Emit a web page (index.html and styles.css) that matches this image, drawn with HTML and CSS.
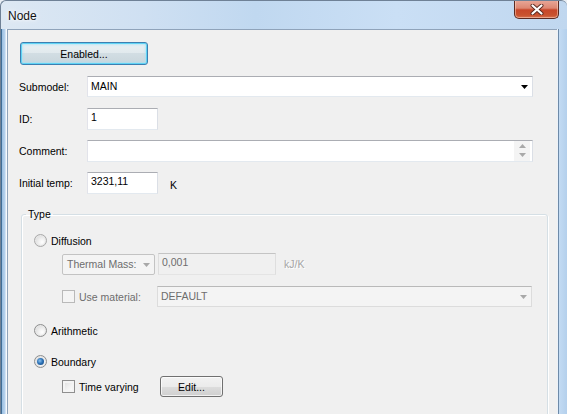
FILE: index.html
```html
<!DOCTYPE html>
<html>
<head>
<meta charset="utf-8">
<title>Node</title>
<link rel="stylesheet" href="styles.css">
</head>
<body>
<div class="window">
  <div class="titlebar">
    <span class="title">Node</span>
    <div class="close">
      <svg width="14" height="11" viewBox="0 0 14 11"><path d="M2.5 1.5 L11.5 9.5 M11.5 1.5 L2.5 9.5" stroke="#5a2a20" stroke-width="4" stroke-linecap="round"/><path d="M2.5 1.5 L11.5 9.5 M11.5 1.5 L2.5 9.5" stroke="#fff" stroke-width="2.2" stroke-linecap="round"/></svg>
    </div>
  </div>
  <div class="frame">
    <div class="edge-left"></div>
    <div class="client">
      <div class="btn default enabled-btn">Enabled...</div>
      <div class="form">
        <div class="row">
          <span class="lbl">Submodel:</span>
          <div class="field combo wide"><span class="val">MAIN</span>
            <svg class="arrow" width="7" height="4" viewBox="0 0 7 4"><path d="M0 0H7L3.5 4Z" fill="#000"/></svg>
          </div>
        </div>
        <div class="row">
          <span class="lbl">ID:</span>
          <div class="field edit short"><span class="val">1</span></div>
        </div>
        <div class="row">
          <span class="lbl">Comment:</span>
          <div class="field edit wide spin">
            <span class="val"></span>
            <div class="spinner">
              <svg width="7" height="4" viewBox="0 0 7 4"><path d="M0 4H7L3.5 0Z" fill="#a9a9a9"/></svg>
              <svg width="7" height="4" viewBox="0 0 7 4"><path d="M0 0H7L3.5 4Z" fill="#a9a9a9"/></svg>
            </div>
          </div>
        </div>
        <div class="row">
          <span class="lbl">Initial temp:</span>
          <div class="field edit short"><span class="val">3231,11</span></div>
          <span class="unit">K</span>
        </div>
      </div>
      <fieldset class="group">
        <legend>Type</legend>
        <div class="opt r-diff">
          <span class="radio dim"></span><span>Diffusion</span>
        </div>
        <div class="sub r-thermal">
          <div class="field dcombo thermal"><span class="val">Thermal Mass:</span>
            <svg class="arrow" width="7" height="4" viewBox="0 0 7 4"><path d="M0 0H7L3.5 4Z" fill="#a8a8a8"/></svg>
          </div>
          <div class="field dedit mass"><span class="val">0,001</span></div>
          <span class="dunit">kJ/K</span>
        </div>
        <div class="sub r-mat">
          <span class="check dis"></span><span class="chk-lbl dis-text">Use material:</span>
          <div class="field dcombo material"><span class="val">DEFAULT</span>
            <svg class="arrow" width="7" height="4" viewBox="0 0 7 4"><path d="M0 0H7L3.5 4Z" fill="#a8a8a8"/></svg>
          </div>
        </div>
        <div class="opt r-arith">
          <span class="radio"></span><span>Arithmetic</span>
        </div>
        <div class="opt r-bound">
          <span class="radio on"></span><span>Boundary</span>
        </div>
        <div class="sub r-time">
          <span class="check"></span><span class="chk-lbl">Time varying</span>
          <div class="btn edit-btn">Edit...</div>
        </div>
      </fieldset>
    </div>
    <div class="edge-right"></div>
  </div>
</div>
</body>
</html>
```
FILE: styles.css
```css
* { box-sizing: border-box; }
html, body { margin: 0; padding: 0; }
body {
  width: 567px;
  height: 414px;
  overflow: hidden;
  background: #e9eef4;
  font-family: "Liberation Sans", Arial, sans-serif;
  font-size: 10.5px;
  color: #000;
}
.window {
  width: 567px;
  height: 414px;
  display: flex;
  flex-direction: column;
  border-radius: 6px 6px 0 0;
  overflow: hidden;
  border-top: 1px solid #6f8196;
  border-left: 1px solid #6f8196;
  background: linear-gradient(to right, #dde8f3 0, #cfe0f2 25%, #c0d8f0 45%, #cadff5 70%, #c0d7ef 100%);
}
.titlebar {
  height: 28px;
  flex: none;
  display: flex;
  justify-content: space-between;
  align-items: flex-start;
}
.title {
  padding: 8px 0 0 7px;
  font-size: 12px;
  line-height: 14px;
  color: #111;
  text-shadow: 0 0 6px #fff, 0 0 3px #fff;
}
.close {
  width: 45px;
  height: 19px;
  margin: -1px 8px 0 0;
  border: 1px solid #5b2a22;
  border-top: none;
  border-radius: 0 0 5px 5px;
  background: linear-gradient(#e9a99a 0, #dd8772 45%, #c7472a 55%, #c9532f 85%, #d87353 100%);
  box-shadow: inset 0 0 0 1px rgba(255, 220, 200, 0.5);
  display: flex;
  align-items: center;
  justify-content: center;
}
.frame {
  flex: 1;
  display: flex;
  min-height: 0;
}
.edge-left {
  width: 6px;
  flex: none;
  background: linear-gradient(to right, #3f6e98 0, #3f6e98 1px, #9cc0e2 1px, #b8d3ee 4px, #eef5fc 5px, #ffffff 6px);
}
.edge-right {
  width: 10px;
  flex: none;
  background: linear-gradient(to right, #f4f7fb 0, #e3ecf6 1px, #6d8aa8 1px, #6d8aa8 2px, #c3dbf3 2px, #b4d0ec 10px);
}
.client {
  flex: 1;
  background: #f0f0f0;
  border-top: 1px solid #8fa3ba;
  border-left: 1px solid #8fa3ba;
  padding-left: 11px;
  overflow: hidden;
}
.btn {
  display: flex;
  align-items: center;
  justify-content: center;
  border: 1px solid #707070;
  border-radius: 3px;
  background: linear-gradient(#f2f2f2 0, #ebebeb 50%, #dddddd 50%, #cfcfcf 100%);
  box-shadow: inset 0 0 0 1px rgba(255,255,255,0.7);
}
.btn.default {
  border-color: #3c7fb1;
  background: linear-gradient(#e9f0f3 0, #e1e9ed 50%, #d2dde3 50%, #c9d6dc 100%);
  box-shadow: inset 0 0 0 1px #5fd3f5, inset 0 0 2px 2px rgba(160, 225, 245, 0.6);
}
.enabled-btn {
  width: 128px;
  height: 23px;
  margin: 12px 0 0 1px;
}
.form {
  margin-top: 11px;
  display: flex;
  flex-direction: column;
  gap: 11px;
}
.row {
  display: flex;
  align-items: center;
  height: 21px;
}
.lbl {
  width: 68px;
  flex: none;
}
.field {
  height: 21px;
  border: 1px solid;
  border-color: #abadb3 #dbdfe6 #e3e9ef #e2e3ea;
  background: #fff;
  display: flex;
  position: relative;
}
.field .val {
  padding: 0 3px;
  flex: 1;
}
.combo { align-items: center; }
.combo .val { line-height: 13px; }
.edit .val { line-height: 13px; padding-top: 2px; }
.wide { width: 446px; }
.short { width: 71px; height: 22px; }
.arrow {
  flex: none;
  margin-right: 4px;
}
.spinner {
  width: 16px;
  display: flex;
  flex-direction: column;
  align-items: center;
  justify-content: center;
  gap: 5px;
  margin-right: 2px;
  background: #f4f4f4;
}
.spin { height: 22px; }
.unit {
  margin-left: 12px;
  padding-top: 4px;
}
.group {
  margin: 14px 9px 0 2px;
  padding: 12px 0 0 12px;
  border: 1px solid #d5dfe5;
  border-radius: 3px;
  box-shadow: inset 1px 1px 0 #fff, 1px 1px 0 #fff;
  height: 230px;
  min-width: 0;
}
.group legend {
  padding: 0 2px;
  margin-left: -8px;
  line-height: 14px;
}
.opt {
  display: flex;
  align-items: center;
  gap: 4px;
  height: 15px;
}
.sub {
  display: flex;
  align-items: center;
  margin-left: 28px;
}
.r-thermal { margin-top: 5px; height: 22px; }
.r-mat { margin-top: 11px; height: 21px; }
.r-arith { margin-top: 16px; }
.r-bound { margin-top: 16px; }
.r-time { margin-top: 7px; height: 21px; }
.radio {
  width: 13px;
  height: 13px;
  border-radius: 50%;
  border: 1px solid #8e8f8f;
  background: radial-gradient(circle at 65% 65%, #ffffff 0, #f0f0f0 35%, #cfcfcf 100%);
  box-shadow: inset 0 0 0 1px #e8e8e8;
  position: relative;
  flex: none;
}
.radio.dim { border-color: #a9a9a9; }
.radio.on::after {
  content: "";
  position: absolute;
  left: 2px;
  top: 2px;
  width: 7px;
  height: 7px;
  border-radius: 50%;
  background: radial-gradient(circle at 40% 40%, #8cc3ee 0, #2f74b9 45%, #0e3e72 100%);
}
.check {
  width: 13px;
  height: 13px;
  border: 1px solid #8f8f8f;
  background: linear-gradient(135deg, #dcdcdc 0, #f4f4f4 60%, #ffffff 100%);
  box-shadow: inset 0 0 0 2px #f4f4f4;
  flex: none;
}
.check.dis {
  border-color: #b9b9b9;
  background: #f4f4f4;
  box-shadow: none;
}
.chk-lbl {
  width: 78px;
  margin-left: 4px;
  flex: none;
}
.dis-text { color: #6d6d6d; }
.dcombo {
  border: 1px solid #c3c3c3;
  border-radius: 2px;
  background: #f4f4f4;
  color: #6d6d6d;
  align-items: center;
}
.dcombo .val { line-height: 13px; }
.thermal { width: 93px; height: 21px; margin-top: 1px; }
.thermal .val { padding-left: 4px; }
.dedit {
  border-color: #c4c4c4 #dedede #e4e4e4 #dedede;
  background: #f0f0f0;
  color: #6d6d6d;
}
.dedit .val { line-height: 13px; padding-top: 2px; }
.mass { width: 118px; height: 22px; margin-left: 3px; }
.dunit {
  margin-left: 8px;
  color: #a6a6a6;
  text-shadow: 1px 1px 0 #fff;
}
.material {
  width: 375px;
  height: 21px;
  border-color: #b9b9b9 #dcdcdc #dcdcdc #dcdcdc;
  border-radius: 0;
}
.edit-btn {
  width: 63px;
  height: 21px;
  margin-left: 3px;
}
```
